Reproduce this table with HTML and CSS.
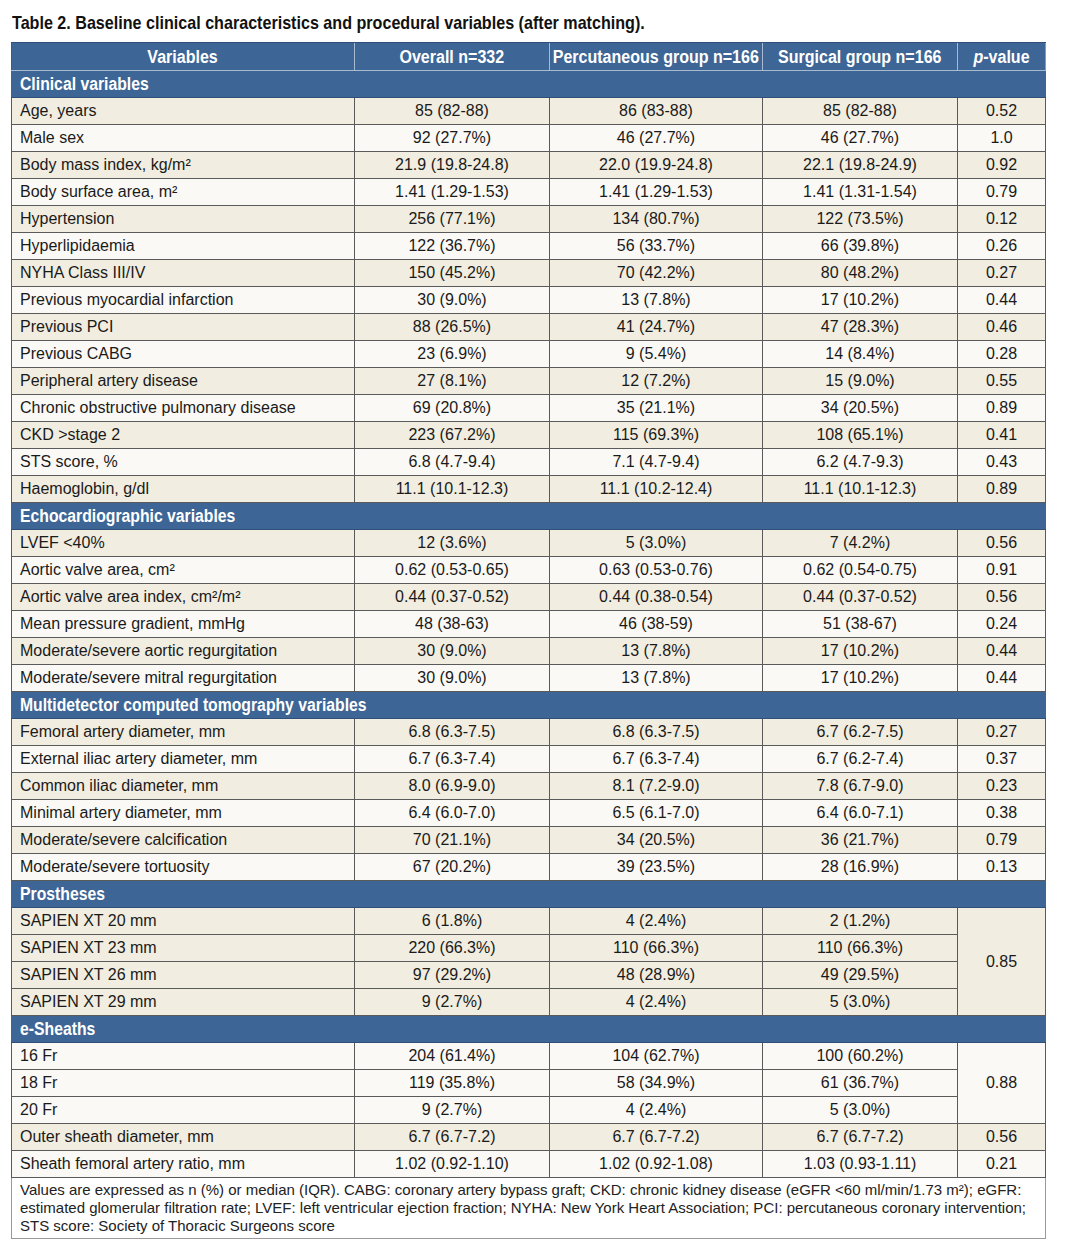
FILE: index.html
```html
<!DOCTYPE html>
<html>
<head>
<meta charset="utf-8">
<link rel="stylesheet" href="styles.css">
</head>
<body>
<div class="page">
<h1 class="title"><span class="cx">Table 2. Baseline clinical characteristics and procedural variables (after matching).</span></h1>
<table class="tbl">
<colgroup>
<col class="c1"><col class="c2"><col class="c3"><col class="c4"><col class="c5">
</colgroup>
<thead>
<tr class="head"><th><span class="cx">Variables</span></th><th><span class="cx">Overall n=332</span></th><th><span class="cx">Percutaneous group n=166</span></th><th><span class="cx">Surgical group n=166</span></th><th><span class="cx"><i>p</i>-value</span></th></tr>
</thead>
<tbody>
<tr class="sec"><td colspan="5"><span class="cx">Clinical variables</span></td></tr>
<tr class="b"><td>Age, years</td><td>85 (82-88)</td><td>86 (83-88)</td><td>85 (82-88)</td><td>0.52</td></tr>
<tr class="w"><td>Male sex</td><td>92 (27.7%)</td><td>46 (27.7%)</td><td>46 (27.7%)</td><td>1.0</td></tr>
<tr class="b"><td>Body mass index, kg/m²</td><td>21.9 (19.8-24.8)</td><td>22.0 (19.9-24.8)</td><td>22.1 (19.8-24.9)</td><td>0.92</td></tr>
<tr class="w"><td>Body surface area, m²</td><td>1.41 (1.29-1.53)</td><td>1.41 (1.29-1.53)</td><td>1.41 (1.31-1.54)</td><td>0.79</td></tr>
<tr class="b"><td>Hypertension</td><td>256 (77.1%)</td><td>134 (80.7%)</td><td>122 (73.5%)</td><td>0.12</td></tr>
<tr class="w"><td>Hyperlipidaemia</td><td>122 (36.7%)</td><td>56 (33.7%)</td><td>66 (39.8%)</td><td>0.26</td></tr>
<tr class="b"><td>NYHA Class III/IV</td><td>150 (45.2%)</td><td>70 (42.2%)</td><td>80 (48.2%)</td><td>0.27</td></tr>
<tr class="w"><td>Previous myocardial infarction</td><td>30 (9.0%)</td><td>13 (7.8%)</td><td>17 (10.2%)</td><td>0.44</td></tr>
<tr class="b"><td>Previous PCI</td><td>88 (26.5%)</td><td>41 (24.7%)</td><td>47 (28.3%)</td><td>0.46</td></tr>
<tr class="w"><td>Previous CABG</td><td>23 (6.9%)</td><td>9 (5.4%)</td><td>14 (8.4%)</td><td>0.28</td></tr>
<tr class="b"><td>Peripheral artery disease</td><td>27 (8.1%)</td><td>12 (7.2%)</td><td>15 (9.0%)</td><td>0.55</td></tr>
<tr class="w"><td>Chronic obstructive pulmonary disease</td><td>69 (20.8%)</td><td>35 (21.1%)</td><td>34 (20.5%)</td><td>0.89</td></tr>
<tr class="b"><td>CKD &gt;stage 2</td><td>223 (67.2%)</td><td>115 (69.3%)</td><td>108 (65.1%)</td><td>0.41</td></tr>
<tr class="w"><td>STS score, %</td><td>6.8 (4.7-9.4)</td><td>7.1 (4.7-9.4)</td><td>6.2 (4.7-9.3)</td><td>0.43</td></tr>
<tr class="b"><td>Haemoglobin, g/dl</td><td>11.1 (10.1-12.3)</td><td>11.1 (10.2-12.4)</td><td>11.1 (10.1-12.3)</td><td>0.89</td></tr>
<tr class="sec"><td colspan="5"><span class="cx">Echocardiographic variables</span></td></tr>
<tr class="b"><td>LVEF &lt;40%</td><td>12 (3.6%)</td><td>5 (3.0%)</td><td>7 (4.2%)</td><td>0.56</td></tr>
<tr class="w"><td>Aortic valve area, cm²</td><td>0.62 (0.53-0.65)</td><td>0.63 (0.53-0.76)</td><td>0.62 (0.54-0.75)</td><td>0.91</td></tr>
<tr class="b"><td>Aortic valve area index, cm²/m²</td><td>0.44 (0.37-0.52)</td><td>0.44 (0.38-0.54)</td><td>0.44 (0.37-0.52)</td><td>0.56</td></tr>
<tr class="w"><td>Mean pressure gradient, mmHg</td><td>48 (38-63)</td><td>46 (38-59)</td><td>51 (38-67)</td><td>0.24</td></tr>
<tr class="b"><td>Moderate/severe aortic regurgitation</td><td>30 (9.0%)</td><td>13 (7.8%)</td><td>17 (10.2%)</td><td>0.44</td></tr>
<tr class="w"><td>Moderate/severe mitral regurgitation</td><td>30 (9.0%)</td><td>13 (7.8%)</td><td>17 (10.2%)</td><td>0.44</td></tr>
<tr class="sec"><td colspan="5"><span class="cx">Multidetector computed tomography variables</span></td></tr>
<tr class="b"><td>Femoral artery diameter, mm</td><td>6.8 (6.3-7.5)</td><td>6.8 (6.3-7.5)</td><td>6.7 (6.2-7.5)</td><td>0.27</td></tr>
<tr class="w"><td>External iliac artery diameter, mm</td><td>6.7 (6.3-7.4)</td><td>6.7 (6.3-7.4)</td><td>6.7 (6.2-7.4)</td><td>0.37</td></tr>
<tr class="b"><td>Common iliac diameter, mm</td><td>8.0 (6.9-9.0)</td><td>8.1 (7.2-9.0)</td><td>7.8 (6.7-9.0)</td><td>0.23</td></tr>
<tr class="w"><td>Minimal artery diameter, mm</td><td>6.4 (6.0-7.0)</td><td>6.5 (6.1-7.0)</td><td>6.4 (6.0-7.1)</td><td>0.38</td></tr>
<tr class="b"><td>Moderate/severe calcification</td><td>70 (21.1%)</td><td>34 (20.5%)</td><td>36 (21.7%)</td><td>0.79</td></tr>
<tr class="w"><td>Moderate/severe tortuosity</td><td>67 (20.2%)</td><td>39 (23.5%)</td><td>28 (16.9%)</td><td>0.13</td></tr>
<tr class="sec"><td colspan="5"><span class="cx">Prostheses</span></td></tr>
<tr class="b"><td>SAPIEN XT 20 mm</td><td>6 (1.8%)</td><td>4 (2.4%)</td><td>2 (1.2%)</td><td rowspan="4">0.85</td></tr>
<tr class="b"><td>SAPIEN XT 23 mm</td><td>220 (66.3%)</td><td>110 (66.3%)</td><td>110 (66.3%)</td></tr>
<tr class="b"><td>SAPIEN XT 26 mm</td><td>97 (29.2%)</td><td>48 (28.9%)</td><td>49 (29.5%)</td></tr>
<tr class="b"><td>SAPIEN XT 29 mm</td><td>9 (2.7%)</td><td>4 (2.4%)</td><td>5 (3.0%)</td></tr>
<tr class="sec"><td colspan="5"><span class="cx">e-Sheaths</span></td></tr>
<tr class="w"><td>16 Fr</td><td>204 (61.4%)</td><td>104 (62.7%)</td><td>100 (60.2%)</td><td rowspan="3">0.88</td></tr>
<tr class="w"><td>18 Fr</td><td>119 (35.8%)</td><td>58 (34.9%)</td><td>61 (36.7%)</td></tr>
<tr class="w"><td>20 Fr</td><td>9 (2.7%)</td><td>4 (2.4%)</td><td>5 (3.0%)</td></tr>
<tr class="b"><td>Outer sheath diameter, mm</td><td>6.7 (6.7-7.2)</td><td>6.7 (6.7-7.2)</td><td>6.7 (6.7-7.2)</td><td>0.56</td></tr>
<tr class="w"><td>Sheath femoral artery ratio, mm</td><td>1.02 (0.92-1.10)</td><td>1.02 (0.92-1.08)</td><td>1.03 (0.93-1.11)</td><td>0.21</td></tr>
<tr class="foot"><td colspan="5">Values are expressed as n (%) or median (IQR). CABG: coronary artery bypass graft; CKD: chronic kidney disease (eGFR &lt;60 ml/min/1.73 m²); eGFR: estimated glomerular filtration rate; LVEF: left ventricular ejection fraction; NYHA: New York Heart Association; PCI: percutaneous coronary intervention; STS score: Society of Thoracic Surgeons score</td></tr>
</tbody>
</table>
</div>
</body>
</html>
```

FILE: styles.css
```css
html, body {
  margin: 0;
  padding: 0;
  background: #ffffff;
}
.page {
  padding: 11px 0 0 11px;
  font-family: "Liberation Sans", Arial, sans-serif;
  color: #1a1a1a;
}
.cx {
  display: inline-block;
  white-space: nowrap;
  transform: scaleX(0.86);
}
.title {
  margin: 0 0 7px 1px;
  font-family: "Liberation Sans", Arial, sans-serif;
  font-weight: bold;
  font-size: 19px;
  line-height: 24px;
  color: #111;
  white-space: nowrap;
}
.title .cx {
  transform-origin: left center;
  transform: scaleX(0.848);
}
.tbl {
  width: 1034px;
  border-collapse: collapse;
  table-layout: fixed;
  border-left: 1px solid #555;
  border-right: 1px solid #999;
  border-bottom: 1px solid #999;
  font-size: 16px;
}
.c1 { width: 343px; }
.c2 { width: 195px; }
.c3 { width: 213px; }
.c4 { width: 195px; }
.c5 { width: 88px; }
.tbl td {
  height: 26px;
  padding: 0;
  text-align: center;
  border: 1px solid #5a5a5a;
  line-height: 18px;
  white-space: nowrap;
}
.tbl td:first-child {
  text-align: left;
  padding-left: 8px;
}
.head th {
  background: #3d6595;
  color: #fff;
  height: 27px;
  padding: 0;
  font-family: "Liberation Sans", Arial, sans-serif;
  font-weight: bold;
  font-size: 18px;
  line-height: 20px;
  text-align: center;
  border-left: 1px solid #a8bad0;
  border-bottom: 1px solid #a8bad0;
  border-top: 1px solid #2f4f78;
  white-space: nowrap;
}
.head th .cx {
  transform: scaleX(0.89);
  transform-origin: center center;
  margin: 0 -30px;
}
.head th:first-child { border-left: none; }
.sec td {
  background: #3d6595;
  color: #fff;
  font-family: "Liberation Sans", Arial, sans-serif;
  font-weight: bold;
  font-size: 18px;
  height: 26px;
  border-color: #3d6595;
  border-bottom: 1px solid #2f4f78;
}
.sec .cx {
  transform-origin: left center;
  transform: scaleX(0.875);
}
.b td { background: #f1ede0; }
.w td { background: #faf9f5; }
.tbl .foot td {
  background: #fff;
  font-size: 15px;
  line-height: 18px;
  padding: 3px 8px 3px 8px;
  text-align: left;
  border: 1px solid #999;
  color: #222;
  white-space: normal;
}
```
